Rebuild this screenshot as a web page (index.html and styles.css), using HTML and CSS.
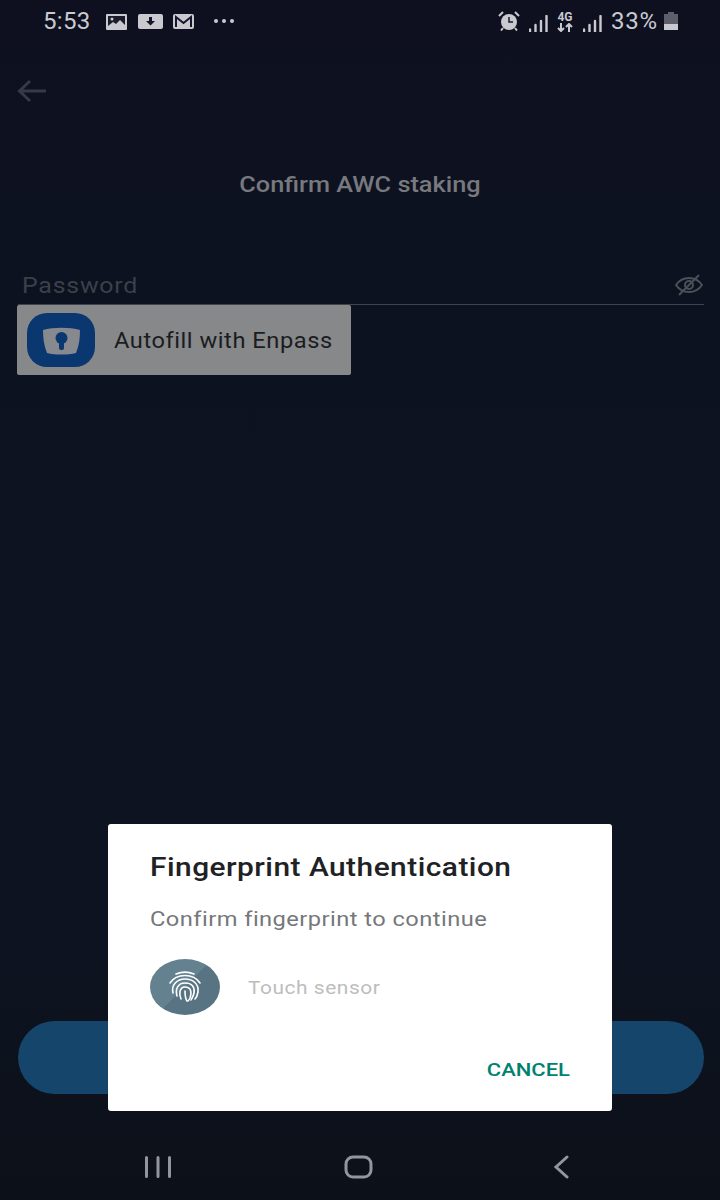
FILE: index.html
```html
<!DOCTYPE html>
<html>
<head>
  <meta charset="utf-8">
  <link rel="stylesheet" href="styles.css">
</head>
<body>
  <div class="tela">
    <div class="status">
      <div class="status-esq">
        <span class="hora">5:53</span>
        <svg class="ic-foto" width="21" height="16" viewBox="0 0 21 16">
          <rect width="21" height="16" rx="1" fill="#c9cad0"/>
          <rect x="2" y="2" width="17" height="12" fill="#1a1c2a"/>
          <circle cx="6" cy="5" r="1.5" fill="#c9cad0"/>
          <path d="M2 12l5-4 3 2 4-4 5 5v3H2z" fill="#c9cad0"/>
        </svg>
        <svg class="ic-down" width="25" height="15" viewBox="0 0 25 15">
          <rect width="25" height="15" rx="2" fill="#c9cad0"/>
          <path d="M11 3h3v4h3l-4.500 4.500L8 7h3z" fill="#14162a"/>
        </svg>
        <svg class="ic-mail" width="21" height="15" viewBox="0 0 21 15">
          <rect width="21" height="15" rx="2" fill="#c9cad0"/>
          <path d="M3 13V3l7.500 6L18 3v10" fill="none" stroke="#14162a" stroke-width="2"/>
        </svg>
        <div class="pontos"><i></i><i></i><i></i></div>
      </div>
      <div class="status-dir">
        <svg class="ic-alarme" width="22" height="20" viewBox="0 0 22 20">
          <circle cx="11" cy="11" r="8" fill="#c9cad0"/>
          <path d="M11 6v5h4" fill="none" stroke="#14162a" stroke-width="1.500"/>
          <path d="M1 5l4-4M21 5l-4-4M5 17l-2 2.500M17 17l2 2.500" stroke="#c9cad0" stroke-width="2"/>
        </svg>
        <svg class="ic-sinal" width="19" height="17" viewBox="0 0 19 17">
          <path d="M1 14.500v2M6.500 10v6.500M12 6v10.500M17.500 1v15.500" stroke="#c9cad0" stroke-width="2.400" stroke-linecap="round"/>
        </svg>
        <div class="rede">
          <span>4G</span>
          <svg width="16" height="9" viewBox="0 0 16 9">
            <path d="M4 0v8M1 5l3 3 3-3M12 9V1M9 4l3-3 3 3" fill="none" stroke="#c9cad0" stroke-width="2"/>
          </svg>
        </div>
        <svg class="ic-sinal" width="19" height="17" viewBox="0 0 19 17">
          <path d="M1 14.500v2M6.500 10v6.500M12 6v10.500M17.500 1v15.500" stroke="#c9cad0" stroke-width="2.400" stroke-linecap="round"/>
        </svg>
        <span class="bateria-txt">33%</span>
        <svg class="ic-bateria" width="14" height="18" viewBox="0 0 14 18">
          <path d="M4 0h6v2h4v16H0V2h4z" fill="#5c5e6c"/>
          <rect y="12" width="14" height="6" fill="#c9cad0"/>
        </svg>
      </div>
    </div>

    <div class="topo">
      <svg width="30" height="24" viewBox="0 0 30 24">
        <path d="M29 12H3M13 2L2.500 12 13 22" fill="none" stroke="#353a46" stroke-width="3"/>
      </svg>
    </div>

    <div class="titulo"><span>Confirm AWC staking</span></div>

    <div class="campo">
      <span class="campo-label">Password</span>
      <svg width="28" height="22" viewBox="0 0 28 22">
        <path d="M1 11c3-4.500 8-7 13-7s10 2.500 13 7c-3 4.500-8 7-13 7s-10-2.500-13-7z" fill="none" stroke="#4d5058" stroke-width="2"/>
        <circle cx="14" cy="11" r="4" fill="none" stroke="#4d5058" stroke-width="2"/>
        <path d="M24 1L4 21" stroke="#4d5058" stroke-width="2"/>
      </svg>
    </div>

    <div class="autofill">
      <svg width="68" height="54" viewBox="0 0 68 54">
        <rect width="68" height="54" rx="20" fill="#0b3770"/>
        <path d="M16 17c10-3 27-3 37 0 0 8-1 16-4 23-8 2-21 2-29 0-3-7-4-15-4-23z" fill="#86898e"/>
        <circle cx="34.500" cy="25" r="6" fill="#0b3770"/>
        <rect x="32" y="27" width="5" height="10" rx="2" fill="#0b3770"/>
      </svg>
      <span>Autofill with Enpass</span>
    </div>

    <div class="espaco"></div>

    <div class="botao"></div>

    <div class="nav">
      <svg width="28" height="22" viewBox="0 0 28 22">
        <path d="M2.500 1.500v19M14 1.500v19M25.500 1.500v19" stroke="#94969c" stroke-width="3" stroke-linecap="round"/>
      </svg>
      <svg class="ic-home" width="29" height="24" viewBox="0 0 29 24">
        <rect x="2" y="2" width="25" height="20" rx="7" fill="none" stroke="#94969c" stroke-width="3"/>
      </svg>
      <svg width="18" height="24" viewBox="0 0 18 24">
        <path d="M15 2L4 12l11 10" fill="none" stroke="#94969c" stroke-width="3" stroke-linecap="round"/>
      </svg>
    </div>

    <div class="dialogo">
      <div class="dialogo-titulo">Fingerprint Authentication</div>
      <div class="dialogo-texto">Confirm fingerprint to continue</div>
      <div class="sensor">
        <div class="digital">
          <svg width="36" height="32" viewBox="0 0 36 32">
            <g fill="none" stroke="#fff" stroke-width="1.600" stroke-linecap="round">
              <path d="M9 3c6-2.500 12-2.500 18 0"/>
              <path d="M3 12C7 6 13 4.500 18 4.500S29 6 33 12"/>
              <path d="M6 22C4 14 10 8 18 8s14 5 13 13c-.5 3-1 5-3 7"/>
              <path d="M10 25c-2-7 1-13 8-13s10 4 9 10c-.5 3-2 5-3 7"/>
              <path d="M14 28c-2-4-2-12 4-12s7 5 5 11c-.5 1-1 2-2 3"/>
              <path d="M18 20c0 4 0 7 2 10"/>
            </g>
          </svg>
        </div>
        <span class="sensor-txt">Touch sensor</span>
      </div>
      <div class="dialogo-acoes"><span class="cancelar">CANCEL</span></div>
    </div>
  </div>
</body>
</html>
```

FILE: styles.css
```css
* {
    box-sizing: border-box;
    margin: 0;
    padding: 0;
}

body {
    width: 720px;
    height: 1200px;
    overflow: hidden;
    font-family: Roboto, "Noto Sans", sans-serif;
}

.tela {
    position: relative;
    display: flex;
    flex-direction: column;
    width: 720px;
    height: 1200px;
    background: linear-gradient(#0e1020 0, #0c1220 300px, #0d1321 900px, #0c1119 1200px);
}

.status {
    display: flex;
    justify-content: space-between;
    align-items: center;
    height: 42px;
    padding: 0 42px 0 43px;
    color: #c9cad0;
}

.status-esq,
.status-dir {
    display: flex;
    align-items: center;
}

.hora {
    width: 63px;
    font-size: 24px;
    letter-spacing: 0.3px;
}

.ic-foto {
    margin-top: 1px;
    margin-left: -0.5px;
}

.ic-down {
    margin-left: 11px;
}

.ic-mail {
    margin-left: 10px;
}

.pontos {
    display: flex;
    gap: 4px;
    margin-left: 20px;
}

.pontos i {
    width: 4px;
    height: 4px;
    border-radius: 50%;
    background: #c9cad0;
}

.ic-sinal {
    margin-left: 9px;
    margin-top: 5px;
}

.rede {
    display: flex;
    flex-direction: column;
    align-items: center;
    width: 18px;
    margin-left: 8px;
    margin-top: 2px;
}

.rede span {
    font-size: 12px;
    font-weight: 700;
    line-height: 11px;
}

.bateria-txt {
    margin-left: 9px;
    font-size: 24px;
    letter-spacing: 0.8px;
}

.ic-bateria {
    margin-left: 6px;
}

.topo {
    height: 72px;
    padding: 37px 0 0 17px;
}

.titulo {
    margin-top: 59px;
    font-size: 22px;
    font-weight: 500;
    line-height: 24px;
    text-align: center;
    color: #77797e;
}

.titulo span {
    display: inline-block;
    transform: scaleX(1.15);
}

.campo {
    display: flex;
    justify-content: space-between;
    align-items: center;
    height: 39px;
    margin: 69px 16px 0 18px;
    padding: 0 1px 0 4px;
    border-bottom: 1px solid #3f434b;
}

.campo-label {
    display: inline-block;
    font-size: 22px;
    letter-spacing: 0.7px;
    color: #3c4049;
    transform: scaleX(1.13);
    transform-origin: left;
}

.autofill {
    display: flex;
    align-items: center;
    gap: 19px;
    width: 334px;
    height: 70px;
    margin-left: 17px;
    padding-left: 10px;
    border-radius: 2px;
    background: #86888a;
}

.autofill span {
    display: inline-block;
    font-size: 22px;
    letter-spacing: 0.5px;
    color: #1b1c1f;
    transform: scaleX(1.075);
    transform-origin: left;
}

.espaco {
    flex: 1;
}

.botao {
    height: 73px;
    margin: 0 16px 0 18px;
    border-radius: 37px;
    background: #15456b;
}

.nav {
    display: flex;
    justify-content: space-between;
    align-items: center;
    height: 106px;
    padding: 40px 150px 0 144px;
}

.ic-home {
    margin-left: -8px;
}

.dialogo {
    position: absolute;
    top: 824px;
    left: 108px;
    width: 504px;
    height: 287px;
    padding: 28px 42px 0;
    border-radius: 3px;
    background: #fff;
}

.dialogo-titulo {
    font-size: 25px;
    font-weight: 500;
    line-height: 32px;
    letter-spacing: 0.4px;
    color: #202124;
    transform: scaleX(1.195);
    transform-origin: left;
}

.dialogo-texto {
    margin-top: 21px;
    font-size: 21px;
    line-height: 28px;
    letter-spacing: 0.4px;
    color: #75777a;
    transform: scaleX(1.127);
    transform-origin: left;
}

.sensor {
    display: flex;
    align-items: center;
    gap: 28px;
    margin-top: 26px;
}

.digital {
    display: flex;
    justify-content: center;
    align-items: center;
    width: 70px;
    height: 56px;
    border-radius: 50%;
    background: linear-gradient(135deg, #64818f 50%, #587482 50%);
}

.sensor-txt {
    display: inline-block;
    font-size: 19px;
    letter-spacing: 0.5px;
    color: #bdbdbd;
    transform: scaleX(1.1);
    transform-origin: left;
}

.dialogo-acoes {
    display: flex;
    justify-content: flex-end;
    margin-top: 43px;
}

.cancelar {
    display: inline-block;
    font-size: 19px;
    font-weight: 500;
    line-height: 24px;
    color: #00826f;
    transform: scaleX(1.155);
    transform-origin: right;
}
```
